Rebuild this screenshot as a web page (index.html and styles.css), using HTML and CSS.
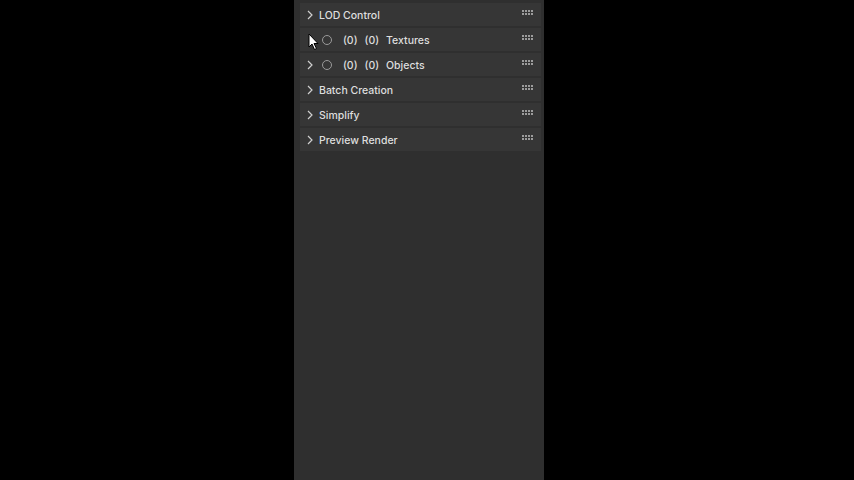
FILE: index.html
```html
<!DOCTYPE html>
<html lang="en">

<head>
    <meta charset="UTF-8">
    <meta name="viewport" content="width=device-width, initial-scale=1.0">
    <title>Panels</title>
    <link rel="stylesheet" href="styles.css">
</head>

<body>
    <div class="panel">
        <div class="row">
            <svg class="chev" width="6" height="10" viewBox="0 0 6 10"><polyline points="1,1 5,5 1,9" /></svg>
            <span class="label">LOD Control</span>
            <span class="grip"><i></i><i></i><i></i><i></i><i></i><i></i><i></i><i></i></span>
        </div>
        <div class="row">
            <svg class="chev hidden" width="6" height="10" viewBox="0 0 6 10"><polyline points="1,1 5,5 1,9" /></svg>
            <span class="radio"></span>
            <span class="count">(0)</span>
            <span class="count">(0)</span>
            <span class="label">Textures</span>
            <span class="grip"><i></i><i></i><i></i><i></i><i></i><i></i><i></i><i></i></span>
            <svg class="cursor" width="12" height="18" viewBox="0 0 12 18">
                <path d="M1 1 L1 14 L4 11 L6.5 16.5 L8.5 15.5 L6 10.5 L10 10.5 Z" fill="#fff" stroke="#000" stroke-width="1"/>
            </svg>
        </div>
        <div class="row">
            <svg class="chev" width="6" height="10" viewBox="0 0 6 10"><polyline points="1,1 5,5 1,9" /></svg>
            <span class="radio"></span>
            <span class="count">(0)</span>
            <span class="count">(0)</span>
            <span class="label">Objects</span>
            <span class="grip"><i></i><i></i><i></i><i></i><i></i><i></i><i></i><i></i></span>
        </div>
        <div class="row">
            <svg class="chev" width="6" height="10" viewBox="0 0 6 10"><polyline points="1,1 5,5 1,9" /></svg>
            <span class="label">Batch Creation</span>
            <span class="grip"><i></i><i></i><i></i><i></i><i></i><i></i><i></i><i></i></span>
        </div>
        <div class="row">
            <svg class="chev" width="6" height="10" viewBox="0 0 6 10"><polyline points="1,1 5,5 1,9" /></svg>
            <span class="label">Simplify</span>
            <span class="grip"><i></i><i></i><i></i><i></i><i></i><i></i><i></i><i></i></span>
        </div>
        <div class="row">
            <svg class="chev" width="6" height="10" viewBox="0 0 6 10"><polyline points="1,1 5,5 1,9" /></svg>
            <span class="label">Preview Render</span>
            <span class="grip"><i></i><i></i><i></i><i></i><i></i><i></i><i></i><i></i></span>
        </div>
    </div>
</body>

</html>
```

FILE: styles.css
```css
body {
    margin: 0;
    background-color: #000;
    font-family: Inter, "Liberation Sans", sans-serif;
}

.panel {
    width: 250px;
    height: 480px;
    margin-left: 294px;
    background-color: #2f2f2f;
    padding: 3px 3px 0 6px;
    box-sizing: border-box;
    display: flex;
    flex-direction: column;
    gap: 2px;
}

.row {
    position: relative;
    height: 23px;
    background-color: #363636;
    display: flex;
    align-items: center;
    padding-left: 7px;
    padding-top: 1px;
    box-sizing: border-box;
    color: #dedede;
    font-size: 10.5px;
    font-weight: 500;
}

.chev {
    fill: none;
    stroke: #d0d0d0;
    stroke-width: 1.2;
    margin-right: 6px;
}

.chev.hidden {
    visibility: hidden;
}

.radio {
    width: 8px;
    height: 8px;
    border: 1px solid #9a9a9a;
    border-radius: 50%;
    margin-left: 3px;
    margin-right: 11px;
}

.count {
    margin-right: 7px;
}

.grip {
    margin-left: auto;
    margin-right: 8px;
    display: grid;
    grid-template-columns: repeat(4, 2px);
    grid-gap: 1px;
    margin-top: -5px;
}

.grip i {
    width: 2px;
    height: 2px;
    background-color: #9d9d9d;
}

.cursor {
    position: absolute;
    left: 8px;
    top: 5px;
}
```
